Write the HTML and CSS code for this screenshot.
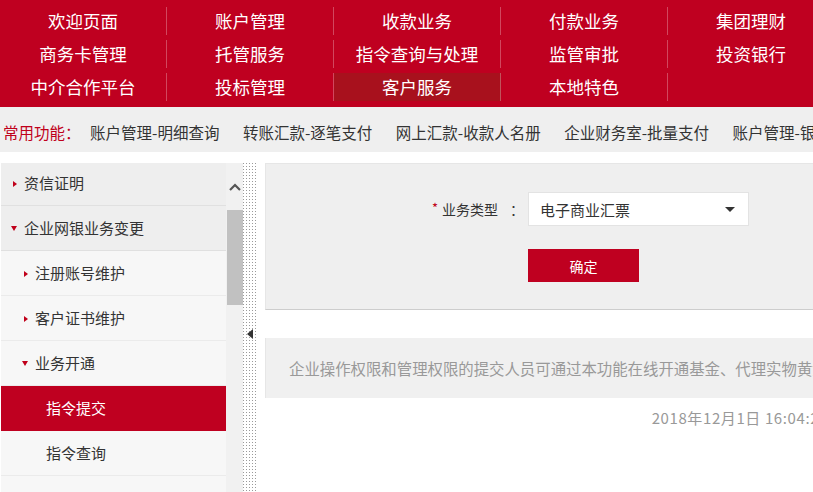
FILE: index.html
```html
<!DOCTYPE html>
<html lang="zh-CN">
<head>
  <meta charset="UTF-8">
  <title>企业网上银行 - 客户服务</title>
  <link rel="stylesheet" href="styles.css">
</head>
<body>
<div class="page">
  <nav class="topnav">
    <div class="nav-cell"><a>欢迎页面</a></div>
    <div class="nav-cell"><a>账户管理</a></div>
    <div class="nav-cell"><a>收款业务</a></div>
    <div class="nav-cell"><a>付款业务</a></div>
    <div class="nav-cell"><a>集团理财</a></div>
    <div class="nav-cell"><a>商务卡管理</a></div>
    <div class="nav-cell"><a>托管服务</a></div>
    <div class="nav-cell"><a>指令查询与处理</a></div>
    <div class="nav-cell"><a>监管审批</a></div>
    <div class="nav-cell"><a>投资银行</a></div>
    <div class="nav-cell"><a>中介合作平台</a></div>
    <div class="nav-cell"><a>投标管理</a></div>
    <div class="nav-cell"><a class="active">客户服务</a></div>
    <div class="nav-cell"><a>本地特色</a></div>
    <div class="nav-cell"><a></a></div>
  </nav>

  <div class="quickbar">
    <span class="quick-title">常用功能：</span>
    <a>账户管理-明细查询</a>
    <a>转账汇款-逐笔支付</a>
    <a>网上汇款-收款人名册</a>
    <a>企业财务室-批量支付</a>
    <a>账户管理-银行对账</a>
  </div>

  <div class="workspace">
    <aside class="sidebar">
      <div class="menu">
        <ul class="menu-list">
          <li class="lv1 closed">资信证明</li>
          <li class="lv1 open">企业网银业务变更</li>
          <li class="lv2 closed">注册账号维护</li>
          <li class="lv2 closed">客户证书维护</li>
          <li class="lv2 open">业务开通</li>
          <li class="lv3 active">指令提交</li>
          <li class="lv3">指令查询</li>
        </ul>
      </div>
      <div class="scrollbar">
        <span class="scroll-up">
          <svg width="12" height="8" viewBox="0 0 12 8"><polyline points="1,7 6,2 11,7" fill="none" stroke="#555" stroke-width="2.2"/></svg>
        </span>
        <span class="scroll-thumb"></span>
      </div>
    </aside>

    <div class="splitter"><span class="collapse"></span></div>

    <main class="content">
      <section class="form-panel">
        <div class="form-grid">
          <label class="form-label"><span class="req">*</span>业务类型<span class="colon">：</span></label>
          <div class="select"><span>电子商业汇票</span><i class="caret"></i></div>
          <button class="btn-primary" type="button">确定</button>
        </div>
      </section>
      <div class="notice">企业操作权限和管理权限的提交人员可通过本功能在线开通基金、代理实物黄金等业务。</div>
      <div class="timestamp">2018年12月1日 16:04:27</div>
    </main>
  </div>
</div>
</body>
</html>
```

FILE: styles.css
```css
html, body { margin: 0; padding: 0; overflow: hidden; background: #fff; }
body { font-family: "Noto Sans CJK SC", "Microsoft YaHei", sans-serif; color: #333; }
a { color: inherit; text-decoration: none; }
ul { list-style: none; margin: 0; padding: 0; }

.page { width: 836px; }

/* top menu */
.topnav { display: grid; grid-template-columns: repeat(5, 167px); grid-auto-rows: 33px; background: #bf0020; padding: 5px 0 3px; }
.nav-cell { padding: 2px 0 3px; }
.nav-cell a { display: block; height: 28px; line-height: 28px; text-align: center; color: #fff; font-size: 17.5px; border-right: 1px solid rgba(255,255,255,0.28); }
.nav-cell a.active { background: #a8111d; }

/* quick links */
.quickbar { height: 45px; box-sizing: border-box; padding: 6px 0 0 3px; line-height: 39px; background: #efefef; font-size: 15.5px; white-space: nowrap; overflow: hidden; }
.quick-title { color: #c0001a; margin-right: 6px; }
.quickbar a { margin-right: 20px; color: #333; }

/* workspace */
.workspace { display: flex; height: 340px; margin-top: 11px; }
.sidebar { display: flex; width: 243px; flex-shrink: 0; }
.menu { width: 225px; margin-left: 1px; overflow: hidden; background: #f7f7f7; }
.menu-list { margin-top: -2px; }
.menu-list li { height: 44px; line-height: 44px; font-size: 15px; color: #333; white-space: nowrap; }
.lv1 { background: #eeeeee; border-bottom: 1px solid #e0e0e0; padding-left: 11px; }
.lv2, .lv3 { background: #f7f7f7; border-bottom: 1px solid #ebebeb; }
.lv2 { padding-left: 22px; }
.lv3 { padding-left: 45px; }
.lv3.active { background: #bf0020; color: #fff; border-bottom-color: #bf0020; }
.closed::before { content: ""; display: inline-block; vertical-align: middle; position: relative; top: -1px; border-left: 4px solid #c0001a; border-top: 3px solid transparent; border-bottom: 3px solid transparent; margin: 0 7px 0 1px; }
.open::before { content: ""; display: inline-block; vertical-align: middle; position: relative; top: -1px; border-top: 5px solid #c0001a; border-left: 3px solid transparent; border-right: 3px solid transparent; margin: 0 7px 0 -1px; }

.scrollbar { width: 17px; background: #f1f1f1; display: flex; flex-direction: column; }
.scroll-up { height: 47px; display: flex; justify-content: center; padding-top: 20px; box-sizing: border-box; }
.scroll-thumb { height: 95px; width: 16px; margin-left: 1px; background: #c1c1c1; }

.splitter { width: 13px; flex-shrink: 0; margin-right: 9px; background-color: #9a9a9a; background-image: linear-gradient(90deg, transparent 1px, #fff 1px), linear-gradient(transparent 1px, #fff 1px); background-size: 3px 3px; }
.collapse { display: block; width: 0; height: 0; margin: 166px 0 0 4px; border-right: 6px solid #333; border-top: 5px solid transparent; border-bottom: 5px solid transparent; }

/* content */
.content { flex: 1; min-width: 0; }
.form-panel { background: #efefef; border: 1px solid #e6e6e6; border-bottom-color: #cdcdcd; padding: 28px 0 27px; }
.form-grid { display: grid; grid-template-columns: 262px 221px; row-gap: 22px; }
.form-label { text-align: right; padding-right: 4px; line-height: 34px; font-size: 14px; color: #333; }
.req { color: #c0001a; font-size: 13px; margin-right: 4px; position: relative; top: -2px; }
.colon { margin-left: 12px; }
.select { height: 34px; box-sizing: border-box; background: #fff; border: 1px solid #e3e3e3; display: flex; align-items: center; justify-content: space-between; padding: 0 13px 0 11px; font-size: 15px; color: #333; }
.caret { width: 0; height: 0; border-top: 5px solid #333; border-left: 5px solid transparent; border-right: 5px solid transparent; }
.btn-primary { grid-column: 2; width: 111px; height: 33px; border: none; background: #bf0020; color: #fff; font-family: inherit; font-size: 14px; padding: 0; cursor: pointer; }

.notice { margin-top: 28px; height: 60px; line-height: 60px; padding-left: 23px; background: #f0f0f0; border-left: 1px solid #e6e6e6; color: #999; font-size: 15.4px; white-space: nowrap; overflow: hidden; }
.timestamp { margin-top: 8px; line-height: 24px; text-align: right; padding-right: 8px; letter-spacing: 0.6px; color: #999; font-size: 15px; }
```
